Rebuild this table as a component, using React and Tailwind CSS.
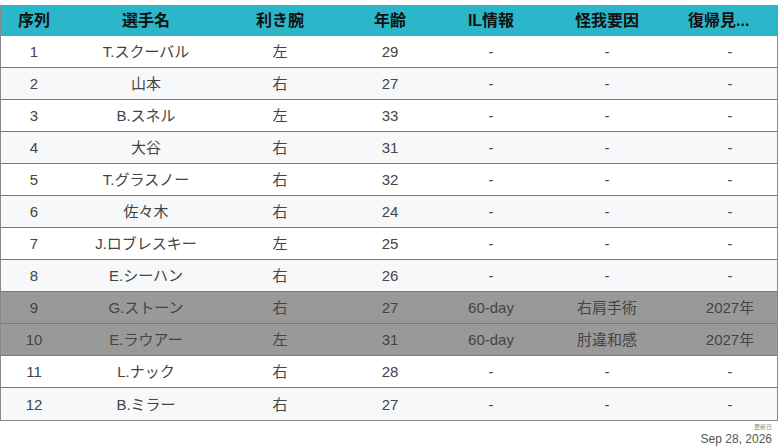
import React from "react";

const rows = [
  ["1", "T.スクーバル", "左", "29", "-", "-", "-"],
  ["2", "山本", "右", "27", "-", "-", "-"],
  ["3", "B.スネル", "左", "33", "-", "-", "-"],
  ["4", "大谷", "右", "31", "-", "-", "-"],
  ["5", "T.グラスノー", "右", "32", "-", "-", "-"],
  ["6", "佐々木", "右", "24", "-", "-", "-"],
  ["7", "J.ロブレスキー", "左", "25", "-", "-", "-"],
  ["8", "E.シーハン", "右", "26", "-", "-", "-"],
  ["9", "G.ストーン", "右", "27", "60-day", "右肩手術", "2027年"],
  ["10", "E.ラウアー", "左", "31", "60-day", "肘違和感", "2027年"],
  ["11", "L.ナック", "右", "28", "-", "-", "-"],
  ["12", "B.ミラー", "右", "27", "-", "-", "-"],
];

const headers = ["序列", "選手名", "利き腕", "年齢", "IL情報", "怪我要因", "復帰見込み"];

const font = { fontFamily: '"Liberation Sans", "Noto Sans CJK JP", sans-serif' };

export default function App() {
  return (
    <div className="w-[780px] h-[447px] bg-white pt-[5px] relative" style={font}>
      <div className="w-[778px] border border-[#8a8a8a]">
        <div className="grid grid-cols-[66px_158px_110px_110px_92px_140px_1fr] h-[30px] bg-[#2bb6c9] items-center text-[16px] font-bold text-[#111]">
          {headers.map((h, i) => (
            <div key={i} className={"text-center truncate " + (i === 6 ? "px-2 text-left pl-[11px]" : "")}>
              {i === 6 ? "復帰見..." : h}
            </div>
          ))}
        </div>
        {rows.map((r, ri) => {
          const injured = r[4] !== "-";
          const bg = injured ? "bg-[#999999]" : ri % 2 === 1 ? "bg-[#f7f8fa]" : "bg-white";
          return (
            <div
              key={ri}
              className={
                "grid grid-cols-[66px_158px_110px_110px_92px_140px_1fr] h-[32px] items-center text-[15px] text-[#444] " +
                bg +
                (ri < rows.length - 1 ? " border-b border-[#777]" : "")
              }
            >
              {r.map((c, ci) => (
                <div key={ci} className={"text-center pt-[2px] " + (ci === 6 ? "pl-[6px]" : "")}>
                  {c}
                </div>
              ))}
            </div>
          );
        })}
      </div>
      <div className="flex flex-col items-end pr-[8px] leading-none text-[#555]">
        <div className="text-[6px] mt-[3px] text-[#888]">更新日</div>
        <div className="text-[12px] mt-[3px]">Sep 28, 2026</div>
      </div>
    </div>
  );
}
